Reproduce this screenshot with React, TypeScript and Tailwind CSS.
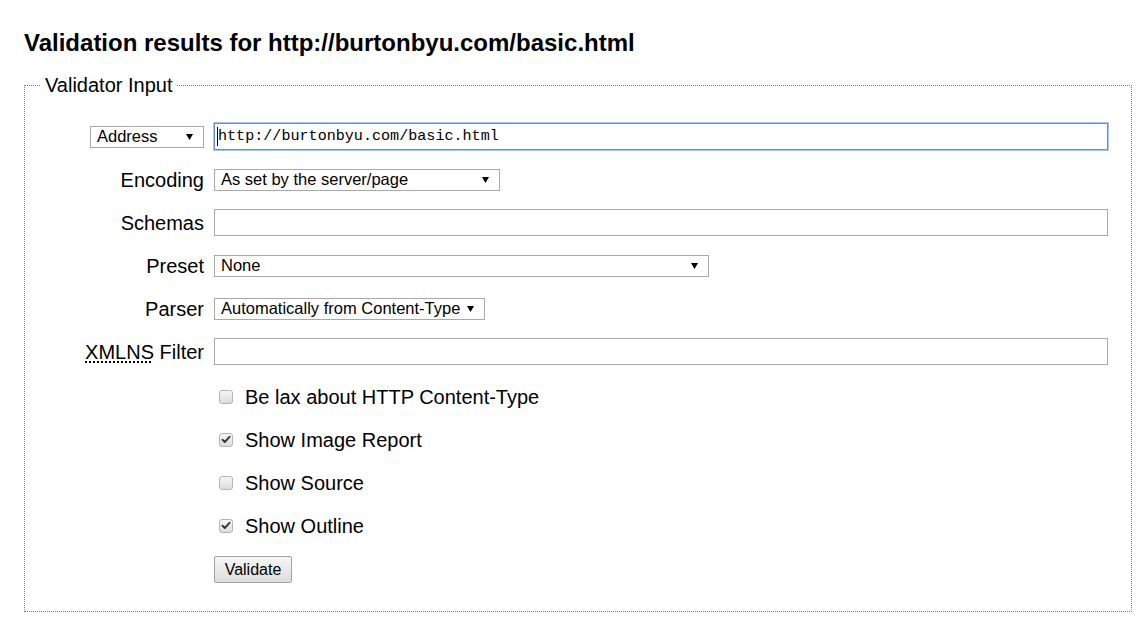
import React from 'react';

const Arrow = () => (
  <svg width="7" height="6" viewBox="0 0 7 6" className="shrink-0">
    <polygon points="0,0 7,0 3.5,6" fill="#000" />
  </svg>
);

const Select = ({ value, width }: { value: string; width: string }) => (
  <div
    className={`${width} h-[22px] flex items-center justify-between border border-[#a9a9a9] bg-white pl-[6px] pr-[10px] text-[16.5px] leading-none text-black`}
  >
    <span className="whitespace-nowrap">{value}</span>
    <Arrow />
  </div>
);

const TextBox = () => <div className="w-full h-[27px] border border-[#a9a9a9] bg-white" />;

const Label = ({ children }: { children: React.ReactNode }) => (
  <div className="justify-self-end text-[20px] leading-none text-black whitespace-nowrap">{children}</div>
);

const Row = ({ left, right }: { left: React.ReactNode; right: React.ReactNode }) => (
  <div className="grid grid-cols-[163px_1fr] gap-x-[10px] items-center h-[43px]">
    {left}
    <div className="flex items-center">{right}</div>
  </div>
);

const Check = ({ checked, label }: { checked?: boolean; label: string }) => (
  <div className="grid grid-cols-[163px_1fr] gap-x-[10px] items-center h-[43px]">
    <div />
    <div className="flex items-center">
      <span className="ml-[5px] w-[14px] h-[14px] rounded-[3px] border border-[#b4b4b4] bg-gradient-to-b from-[#f6f6f6] to-[#dcdcdc] flex items-center justify-center">
        {checked && (
          <svg width="10" height="9" viewBox="0 0 10 9">
            <path d="M1.5 4.8 L3.8 7 L8.5 1.8" stroke="#3a3a3a" strokeWidth="2" fill="none" strokeLinecap="round" strokeLinejoin="round" />
          </svg>
        )}
      </span>
      <span className="ml-[12px] text-[20px] leading-none text-black whitespace-nowrap">{label}</span>
    </div>
  </div>
);

export default function App() {
  return (
    <div className="min-h-screen bg-white pl-[24px] pr-[16px] pb-[10px] font-['Liberation_Sans',Arial,sans-serif] text-black">
      <h1 className="mt-[29px] text-[24px] leading-[28px] font-bold">
        Validation results for http://burtonbyu.com/basic.html
      </h1>

      <fieldset className="mt-[17px] border border-dotted border-[#7a7a7a] pl-[16px] pr-[23px] pt-[18px] pb-[20px]">
        <legend className="px-[4px] text-[20px] leading-[23px]">Validator Input</legend>

        <Row
          left={
            <div className="justify-self-end">
              <Select value="Address" width="w-[114px]" />
            </div>
          }
          right={
            <div className="w-full h-[27px] flex items-center border border-[#5b8fe4] shadow-[0_0_0_1px_#a9c6f3] bg-white pl-[2px]">
              <span className="w-px h-[19px] bg-black" />
              <span className="font-['Liberation_Mono','Courier_New',monospace] text-[15.1px] leading-none">
                http://burtonbyu.com/basic.html
              </span>
            </div>
          }
        />
        <Row left={<Label>Encoding</Label>} right={<Select value="As set by the server/page" width="w-[286px]" />} />
        <Row left={<Label>Schemas</Label>} right={<TextBox />} />
        <Row left={<Label>Preset</Label>} right={<Select value="None" width="w-[495px]" />} />
        <Row left={<Label>Parser</Label>} right={<Select value="Automatically from Content-Type" width="w-[271px]" />} />
        <Row
          left={
            <Label>
              <abbr className="underline decoration-dotted underline-offset-[3px]" title="XML namespaces">
                XMLNS
              </abbr>{' '}
              Filter
            </Label>
          }
          right={<TextBox />}
        />

        <div className="pt-[2px] pb-[1px]">
          <Check label="Be lax about HTTP Content-Type" />
          <Check checked label="Show Image Report" />
          <Check label="Show Source" />
          <Check checked label="Show Outline" />
        </div>

        <Row
          left={<div />}
          right={
            <button className="w-[78px] h-[27px] border border-[#a3a3a3] rounded-[2px] bg-gradient-to-b from-[#f6f6f6] to-[#dddddd] text-[16px] leading-none text-black">
              Validate
            </button>
          }
        />
      </fieldset>
    </div>
  );
}
